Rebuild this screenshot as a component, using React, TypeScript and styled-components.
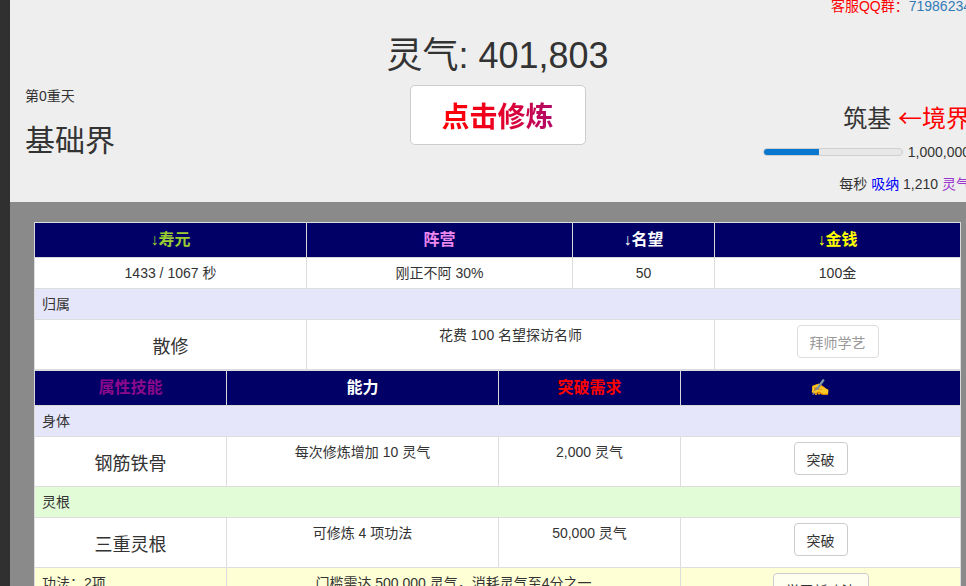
import React from "react";
import styled, { createGlobalStyle } from "styled-components";

const Global = createGlobalStyle`
  html, body { margin: 0; padding: 0; overflow: hidden; background: #303030; }
  body {
    font-family: "Liberation Sans", Arial, "Noto Sans CJK SC", sans-serif;
    font-size: 14px;
    color: #333;
  }
  * { box-sizing: border-box; }
`;

const Page = styled.div`
  margin-left: 10px;
  width: 975px;
`;

const Header = styled.header`
  background: #eeeeee;
  height: 202px;
  display: flex;
  flex-direction: column;
`;

const ServiceLine = styled.div`
  height: 12px;
  line-height: 12px;
  font-size: 14px;
  text-align: right;
  padding-right: 14px;
  white-space: nowrap;
  color: #ff0000;
`;

const ServiceNumber = styled.span`
  color: #337ab7;
`;

const MainRow = styled.div`
  display: grid;
  grid-template-columns: 1fr auto 1fr;
`;

const LeftCol = styled.div`
  padding: 76px 0 0 15px;
`;

const Heaven = styled.div`
  font-size: 14px;
  line-height: 16px;
`;

const WorldName = styled.div`
  margin-top: 20px;
  font-size: 30px;
  line-height: 34px;
`;

const CenterCol = styled.div`
  padding-top: 24px;
  display: flex;
  flex-direction: column;
  align-items: center;
`;

const Aura = styled.div`
  font-size: 36px;
  line-height: 40px;
  white-space: nowrap;
`;

const CultivateButton = styled.button`
  margin-top: 9px;
  width: 176px;
  height: 60px;
  background: #fff;
  border: 1px solid #ccc;
  border-radius: 5px;
  cursor: pointer;
  font-family: inherit;
  padding: 0;
`;

const GradientText = styled.span`
  font-size: 28px;
  font-weight: bold;
  background: linear-gradient(to right, #ff0000 0%, #ee0020 45%, #b0086a 100%);
  -webkit-background-clip: text;
  background-clip: text;
  color: transparent;
`;

const RightCol = styled.div`
  padding: 91px 15px 0 0;
  text-align: right;
  white-space: nowrap;
`;

const Realm = styled.div`
  font-size: 24px;
  line-height: 28px;
`;

const RealmHint = styled.span`
  color: #ff0000;
`;

const RealmArrow = styled.span`
  font-family: "Noto Sans CJK SC", sans-serif;
`;

const ProgressRow = styled.div`
  margin-top: 11px;
  height: 16px;
  display: flex;
  justify-content: flex-end;
  align-items: center;
  gap: 5px;
  font-size: 14px;
`;

const Track = styled.div`
  width: 140px;
  height: 8px;
  border-radius: 4px;
  background: #e8e8e8;
  border: 1px solid #cfcfcf;
  overflow: hidden;
`;

const Fill = styled.div`
  height: 100%;
  background: #0a77cf;
`;

const RateLine = styled.div`
  margin-top: 16px;
  font-size: 14px;
  line-height: 16px;
`;

const Tone = styled.span<{ $c: string }>`
  color: ${(p) => p.$c};
`;

const Board = styled.section`
  background: #8a8a8a;
  padding: 20px 24px 24px;
`;

const Table = styled.table`
  width: 100%;
  border-collapse: collapse;
  table-layout: fixed;
  background: #fff;
  border: 1px solid #ddd;
`;

const HeadCell = styled.th<{ $c: string }>`
  background: #000066;
  color: ${(p) => p.$c};
  font-size: 16px;
  font-weight: bold;
  line-height: 20px;
  padding: 7px 8px;
  border: 1px solid #d8d8d8;
  border-top: none;
  text-align: center;
`;

const Arrow = styled.span`
  font-weight: normal;
`;

const Cell = styled.td`
  border: 1px solid #ddd;
  padding: 7px 8px;
  line-height: 16px;
  text-align: center;
  vertical-align: top;
`;

const SectionRow = styled.tr<{ $bg: string }>`
  background: ${(p) => p.$bg};
`;

const SectionLabel = styled.td`
  border: 1px solid #ddd;
  padding: 7px 7px;
  line-height: 16px;
  text-align: left;
  vertical-align: top;
`;

const NameCell = styled.td`
  border: 1px solid #ddd;
  padding: 0 8px;
  font-size: 18px;
  text-align: center;
  vertical-align: middle;
`;

const ButtonCell = styled.td`
  border: 1px solid #ddd;
  padding: 5px 8px 11px;
  text-align: center;
  vertical-align: top;
`;

const ActionButton = styled.button<{ $muted?: boolean; $bg?: string }>`
  height: 33px;
  padding: 0 12px;
  font-family: inherit;
  font-size: 14px;
  color: ${(p) => (p.$muted ? "#999" : "#333")};
  background: ${(p) => p.$bg || "#fff"};
  border: 1px solid ${(p) => (p.$muted ? "#ddd" : "#ccc")};
  border-radius: 4px;
  cursor: ${(p) => (p.$muted ? "default" : "pointer")};
  display: inline-block;
  vertical-align: top;
`;

const Emoji = styled.span`
  font-family: "Noto Color Emoji", "Apple Color Emoji", "Segoe UI Emoji", sans-serif;
  font-weight: normal;
  font-size: 16px;
`;

const aura = 401803;
const nextRealm = 1000000;

export default function App() {
  return (
    <>
      <Global />
      <Page>
        <Header>
          <ServiceLine>
            客服QQ群：<ServiceNumber>71986234</ServiceNumber>
          </ServiceLine>
          <MainRow>
            <LeftCol>
              <Heaven>第0重天</Heaven>
              <WorldName>基础界</WorldName>
            </LeftCol>
            <CenterCol>
              <Aura>灵气: {aura.toLocaleString("en-US")}</Aura>
              <CultivateButton>
                <GradientText>点击修炼</GradientText>
              </CultivateButton>
            </CenterCol>
            <RightCol>
              <Realm>
                筑基{" "}
                <RealmHint>
                  <RealmArrow>←</RealmArrow>境界
                </RealmHint>
              </Realm>
              <ProgressRow>
                <Track>
                  <Fill style={{ width: `${(aura / nextRealm) * 100}%` }} />
                </Track>
                <span>{nextRealm.toLocaleString("en-US")}</span>
              </ProgressRow>
              <RateLine>
                每秒 <Tone $c="#0000ff">吸纳</Tone> 1,210{" "}
                <Tone $c="#9933cc">灵气</Tone>
              </RateLine>
            </RightCol>
          </MainRow>
        </Header>

        <Board>
          <Table>
            <colgroup>
              <col style={{ width: 272 }} />
              <col style={{ width: 266 }} />
              <col style={{ width: 142 }} />
              <col />
            </colgroup>
            <thead>
              <tr>
                <HeadCell $c="#9acd32">
                  <Arrow>↓</Arrow>寿元
                </HeadCell>
                <HeadCell $c="#ee88ee">阵营</HeadCell>
                <HeadCell $c="#ffffff">
                  <Arrow>↓</Arrow>名望
                </HeadCell>
                <HeadCell $c="#ffff00">
                  <Arrow>↓</Arrow>金钱
                </HeadCell>
              </tr>
            </thead>
            <tbody>
              <tr>
                <Cell>1433 / 1067 秒</Cell>
                <Cell>刚正不阿 30%</Cell>
                <Cell>50</Cell>
                <Cell>100金</Cell>
              </tr>
              <SectionRow $bg="#e6e6fa">
                <SectionLabel colSpan={4}>归属</SectionLabel>
              </SectionRow>
              <tr>
                <NameCell>散修</NameCell>
                <Cell colSpan={2}>花费 100 名望探访名师</Cell>
                <ButtonCell>
                  <ActionButton $muted>拜师学艺</ActionButton>
                </ButtonCell>
              </tr>
            </tbody>
          </Table>

          <Table>
            <colgroup>
              <col style={{ width: 192 }} />
              <col style={{ width: 272 }} />
              <col style={{ width: 182 }} />
              <col />
            </colgroup>
            <thead>
              <tr>
                <HeadCell $c="#8b0a8b">属性技能</HeadCell>
                <HeadCell $c="#ffffff">能力</HeadCell>
                <HeadCell $c="#ff0000">突破需求</HeadCell>
                <HeadCell $c="#ffffff">
                  <Emoji>✍️</Emoji>
                </HeadCell>
              </tr>
            </thead>
            <tbody>
              <SectionRow $bg="#e6e6fa">
                <SectionLabel colSpan={4}>身体</SectionLabel>
              </SectionRow>
              <tr>
                <NameCell>钢筋铁骨</NameCell>
                <Cell>每次修炼增加 10 灵气</Cell>
                <Cell>2,000 灵气</Cell>
                <ButtonCell>
                  <ActionButton>突破</ActionButton>
                </ButtonCell>
              </tr>
              <SectionRow $bg="#e3fcd8">
                <SectionLabel colSpan={4}>灵根</SectionLabel>
              </SectionRow>
              <tr>
                <NameCell>三重灵根</NameCell>
                <Cell>可修炼 4 项功法</Cell>
                <Cell>50,000 灵气</Cell>
                <ButtonCell>
                  <ActionButton>突破</ActionButton>
                </ButtonCell>
              </tr>
              <SectionRow $bg="#ffffd6">
                <SectionLabel>功法：2项</SectionLabel>
                <Cell colSpan={2}>门槛需达 500,000 灵气，消耗灵气至4分之一</Cell>
                <ButtonCell>
                  <ActionButton $bg="#fffff0">学习新功法</ActionButton>
                </ButtonCell>
              </SectionRow>
              <tr>
                <NameCell>吐纳术</NameCell>
                <Cell>每秒吸纳灵气</Cell>
                <Cell>—</Cell>
                <ButtonCell>
                  <ActionButton>修炼</ActionButton>
                </ButtonCell>
              </tr>
            </tbody>
          </Table>
        </Board>
      </Page>
    </>
  );
}
